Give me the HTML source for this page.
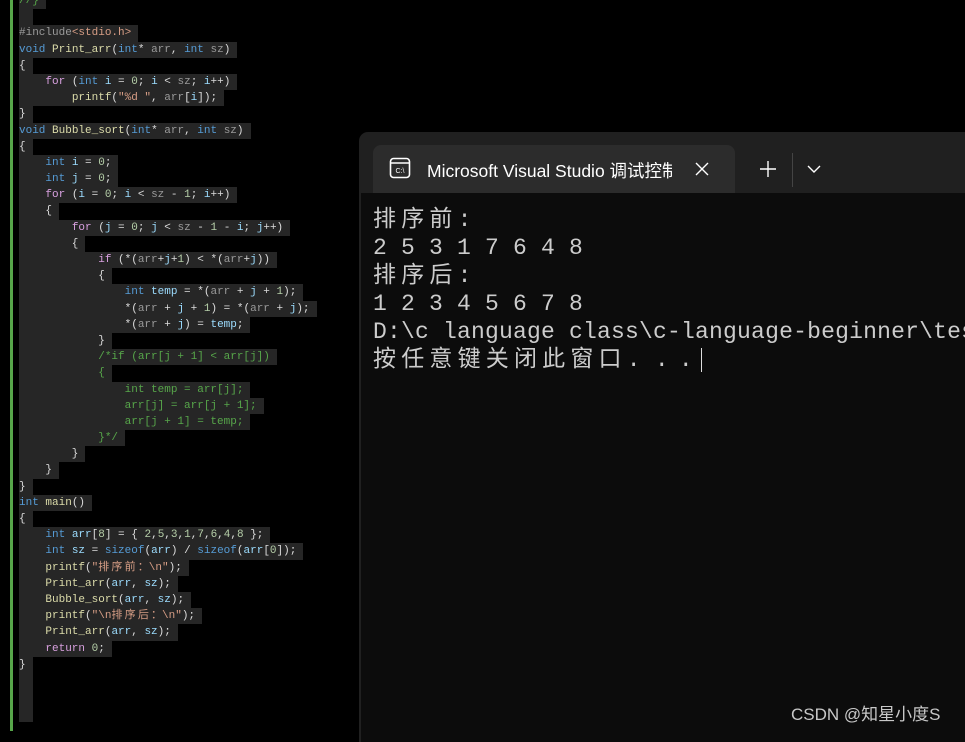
<!DOCTYPE html>
<html><head><meta charset="utf-8"><style>
html,body{margin:0;padding:0;width:965px;height:731px;overflow:hidden;background:#000;}
#ed{position:absolute;left:0;top:0;width:359px;height:731px;background:#000;}
.green{position:absolute;left:10px;top:0;width:3px;height:731px;background:#57a64a;}
.col{position:absolute;left:19px;top:0;width:14px;height:722px;background:#262626;}
.code{position:absolute;left:19px;top:-7px;font-family:"Liberation Mono","Noto Sans CJK SC",monospace;font-size:11px;color:#dcdcdc;}
.l{height:16.2px;line-height:16.2px;white-space:pre;}
.l>span.b{display:inline-block;background:#262626;padding-right:7px;height:16.2px;}
.k{color:#569cd6}.c{color:#d8a0df}.f{color:#dcdcaa}.p{color:#9a9a9a}.v{color:#9cdcfe}.n{color:#b5cea8}.s{color:#d69d85}.g{color:#57a64a}
.cj{display:inline-block;width:13.2px;font-size:11px}
#win{position:absolute;left:359px;top:132px;width:620px;height:610px;background:#202020;border-radius:9px 0 0 0;}
#tab{position:absolute;left:14px;top:13px;width:362px;height:50px;background:#2c2c2c;border-radius:8px 8px 0 0;}
#tab .t{position:absolute;left:54px;top:13px;font-family:"Liberation Sans","Noto Sans CJK SC",sans-serif;font-size:17.5px;color:#fff;white-space:nowrap;width:245px;overflow:hidden;}
#con{position:absolute;left:2px;top:61px;right:0;bottom:0;background:#0c0c0c;}
.ct{position:absolute;left:12px;top:13px;font-family:"Liberation Mono","Noto Sans CJK SC",monospace;font-size:23px;color:#cccccc;letter-spacing:0.2px;}
.ct div{height:28px;line-height:28px;white-space:pre;}
.z{display:inline-block;width:28.2px;letter-spacing:0}
.wm{position:absolute;left:791px;top:700px;font-family:"Liberation Sans","Noto Sans CJK SC",sans-serif;font-size:17px;color:#c8c8c8;}
</style></head><body>
<div id="ed">
<div class="green"></div><div class="col"></div>
<div class="code">
<div class="l"><span class="b g">//}</span></div>
<div class="l"> </div>
<div class="l"><span class="b"><span class="p">#include</span><span class="s">&lt;stdio.h&gt;</span></span></div>
<div class="l"><span class="b"><span class="k">void</span> <span class="f">Print_arr</span>(<span class="k">int</span>* <span class="p">arr</span>, <span class="k">int</span> <span class="p">sz</span>)</span></div>
<div class="l"><span class="b">{</span></div>
<div class="l"><span class="b">    <span class="c">for</span> (<span class="k">int</span> <span class="v">i</span> = <span class="n">0</span>; <span class="v">i</span> &lt; <span class="p">sz</span>; <span class="v">i</span>++)</span></div>
<div class="l"><span class="b">        <span class="f">printf</span>(<span class="s">"%d "</span>, <span class="p">arr</span>[<span class="v">i</span>]);</span></div>
<div class="l"><span class="b">}</span></div>
<div class="l"><span class="b"><span class="k">void</span> <span class="f">Bubble_sort</span>(<span class="k">int</span>* <span class="p">arr</span>, <span class="k">int</span> <span class="p">sz</span>)</span></div>
<div class="l"><span class="b">{</span></div>
<div class="l"><span class="b">    <span class="k">int</span> <span class="v">i</span> = <span class="n">0</span>;</span></div>
<div class="l"><span class="b">    <span class="k">int</span> <span class="v">j</span> = <span class="n">0</span>;</span></div>
<div class="l"><span class="b">    <span class="c">for</span> (<span class="v">i</span> = <span class="n">0</span>; <span class="v">i</span> &lt; <span class="p">sz</span> - <span class="n">1</span>; <span class="v">i</span>++)</span></div>
<div class="l"><span class="b">    {</span></div>
<div class="l"><span class="b">        <span class="c">for</span> (<span class="v">j</span> = <span class="n">0</span>; <span class="v">j</span> &lt; <span class="p">sz</span> - <span class="n">1</span> - <span class="v">i</span>; <span class="v">j</span>++)</span></div>
<div class="l"><span class="b">        {</span></div>
<div class="l"><span class="b">            <span class="c">if</span> (*(<span class="p">arr</span>+<span class="v">j</span>+<span class="n">1</span>) &lt; *(<span class="p">arr</span>+<span class="v">j</span>))</span></div>
<div class="l"><span class="b">            {</span></div>
<div class="l"><span class="b">                <span class="k">int</span> <span class="v">temp</span> = *(<span class="p">arr</span> + <span class="v">j</span> + <span class="n">1</span>);</span></div>
<div class="l"><span class="b">                *(<span class="p">arr</span> + <span class="v">j</span> + <span class="n">1</span>) = *(<span class="p">arr</span> + <span class="v">j</span>);</span></div>
<div class="l"><span class="b">                *(<span class="p">arr</span> + <span class="v">j</span>) = <span class="v">temp</span>;</span></div>
<div class="l"><span class="b">            }</span></div>
<div class="l"><span class="b g">            /*if (arr[j + 1] &lt; arr[j])</span></div>
<div class="l"><span class="b g">            {</span></div>
<div class="l"><span class="b g">                int temp = arr[j];</span></div>
<div class="l"><span class="b g">                arr[j] = arr[j + 1];</span></div>
<div class="l"><span class="b g">                arr[j + 1] = temp;</span></div>
<div class="l"><span class="b g">            }*/</span></div>
<div class="l"><span class="b">        }</span></div>
<div class="l"><span class="b">    }</span></div>
<div class="l"><span class="b">}</span></div>
<div class="l"><span class="b"><span class="k">int</span> <span class="f">main</span>()</span></div>
<div class="l"><span class="b">{</span></div>
<div class="l"><span class="b">    <span class="k">int</span> <span class="v">arr</span>[<span class="n">8</span>] = { <span class="n">2</span>,<span class="n">5</span>,<span class="n">3</span>,<span class="n">1</span>,<span class="n">7</span>,<span class="n">6</span>,<span class="n">4</span>,<span class="n">8</span> };</span></div>
<div class="l"><span class="b">    <span class="k">int</span> <span class="v">sz</span> = <span class="k">sizeof</span>(<span class="v">arr</span>) / <span class="k">sizeof</span>(<span class="v">arr</span>[<span class="n">0</span>]);</span></div>
<div class="l"><span class="b">    <span class="f">printf</span>(<span class="s">"<span class="cj">排</span><span class="cj">序</span><span class="cj">前</span>：\n"</span>);</span></div>
<div class="l"><span class="b">    <span class="f">Print_arr</span>(<span class="v">arr</span>, <span class="v">sz</span>);</span></div>
<div class="l"><span class="b">    <span class="f">Bubble_sort</span>(<span class="v">arr</span>, <span class="v">sz</span>);</span></div>
<div class="l"><span class="b">    <span class="f">printf</span>(<span class="s">"\n<span class="cj">排</span><span class="cj">序</span><span class="cj">后</span>：\n"</span>);</span></div>
<div class="l"><span class="b">    <span class="f">Print_arr</span>(<span class="v">arr</span>, <span class="v">sz</span>);</span></div>
<div class="l"><span class="b">    <span class="c">return</span> <span class="n">0</span>;</span></div>
<div class="l"><span class="b">}</span></div>
</div>
</div>
<div id="win">
<div id="tab">
<svg style="position:absolute;left:16px;top:12px" width="22" height="22" viewBox="0 0 22 22"><rect x="1.5" y="1.5" width="19" height="19" rx="3" fill="none" stroke="#fff" stroke-width="1.6"/><line x1="2" y1="6" x2="20" y2="6" stroke="#fff" stroke-width="1.4"/><text x="11" y="16" font-family="Liberation Sans" font-size="7" fill="#fff" text-anchor="middle">C:\</text></svg>
<div class="t">Microsoft Visual Studio 调试控制台</div>
<svg style="position:absolute;left:322px;top:17px" width="14" height="14"><path d="M1 1L13 13M13 1L1 13" stroke="#fff" stroke-width="1.4"/></svg>
</div>
<svg style="position:absolute;left:401px;top:29px" width="16" height="16"><path d="M8 0V16M0 8H16" stroke="#fff" stroke-width="1.4"/></svg>
<div style="position:absolute;left:433px;top:21px;width:1px;height:34px;background:#444"></div>
<svg style="position:absolute;left:448px;top:33px" width="14" height="9"><path d="M1 1L7 7L13 1" stroke="#fff" stroke-width="1.4" fill="none"/></svg>
<div id="con"><div class="ct"><div><span class="z">排</span><span class="z">序</span><span class="z">前</span>:</div><div>2 5 3 1 7 6 4 8</div><div><span class="z">排</span><span class="z">序</span><span class="z">后</span>:</div><div>1 2 3 4 5 6 7 8</div><div>D:\c language class\c-language-beginner\test</div><div><span class="z">按</span><span class="z">任</span><span class="z">意</span><span class="z">键</span><span class="z">关</span><span class="z">闭</span><span class="z">此</span><span class="z">窗</span><span class="z">口</span><span class="z">.</span>.<span style="display:inline-block;width:10px"></span>.<span style="display:inline-block;width:1px;height:24px;background:#ddd;vertical-align:middle;margin-left:8px"></span></div></div></div>
</div>
<div class="wm">CSDN @知星小度S</div>
</body></html>
